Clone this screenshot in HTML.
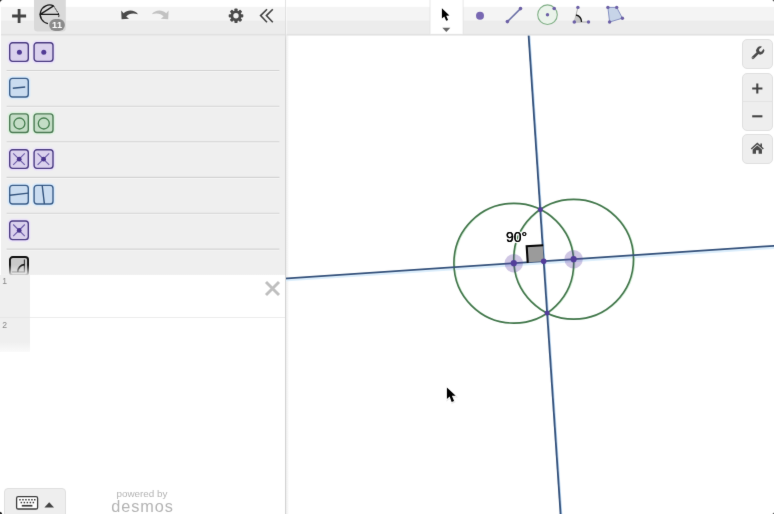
<!DOCTYPE html>
<html>
<head>
<meta charset="utf-8">
<title>Geometry</title>
<style>
html,body{margin:0;padding:0;background:#fff;}
body{width:774px;height:514px;overflow:hidden;position:relative;font-family:"Liberation Sans",Arial,sans-serif;}
#root{position:absolute;left:0;top:0;width:774px;height:514px;overflow:hidden;background:#fff;filter:url(#softblur);}
.abs{position:absolute;}
#ltool{left:1px;top:6.5px;width:284.5px;height:28.5px;background:linear-gradient(#f4f4f4,#f1f1f1 50%,#ececec 55%,#ebebeb);border-bottom:1px solid #dcdcdc;box-sizing:border-box;}
#gtool{left:286.5px;top:6.5px;width:487.5px;height:28.5px;background:linear-gradient(#f4f4f4,#f1f1f1 50%,#ececec 55%,#ebebeb);border-bottom:1px solid #dcdcdc;box-sizing:border-box;}
#folder{left:1px;top:35px;width:284.5px;height:239.5px;background:#efefef;}
.sep{position:absolute;left:6.5px;width:273px;height:1px;background:#d9d9d9;}
.ic{position:absolute;width:20px;height:20px;box-sizing:border-box;border-radius:3.2px;}
.pu{background:#dad1ed;border:1.6px solid #4b3c82;box-shadow:0 0 2.5px 1px #eae1fb;}
.bl{background:#cadcf0;border:1.6px solid #3b5d88;box-shadow:0 0 2.5px 1px #d9ecfd;}
.gr{background:#c4ddc6;border:1.6px solid #4c7a54;box-shadow:0 0 2.5px 1px #dcf2de;}
.bk{background:#cacaca;border:2px solid #111;}
.ic svg{position:absolute;left:-1.6px;top:-1.6px;width:20px;height:20px;}
#rows{left:0;top:274.5px;width:285.5px;}
.row{position:absolute;left:0;width:285.5px;background:#fff;}
.tab{position:absolute;left:0;top:0;width:30px;background:#efefef;}
.num{position:absolute;left:2.2px;top:1.8px;font-size:8.6px;color:#888;}
#vborder{left:285px;top:0;width:1.2px;height:514px;background:linear-gradient(#e4e4e4 0,#dcdcdc 36px,#d4d4d4 40px,#d4d4d4);}
#vborder2{left:286.3px;top:35px;width:2px;height:479px;background:#f1f1f1;}
.btn{position:absolute;left:742px;width:30.5px;background:#eeeeee;border:1px solid #e0e0e0;border-radius:5px;box-sizing:border-box;}
#kb{left:4px;top:487.5px;width:62px;height:30px;background:#eeeeee;border:1px solid #e0e0e0;border-radius:4px;box-sizing:border-box;}
#pw{left:100px;top:487px;width:84px;text-align:center;color:#b4b4b4;line-height:1;}
#pw .a{font-size:9.9px;display:block;margin-top:2.2px;}
#pw .b{font-size:16.3px;letter-spacing:0.9px;display:block;margin-top:-0.9px;padding-left:1px;}
</style>
</head>
<body>
<svg width="0" height="0" style="position:absolute"><defs><filter id="softblur" x="0" y="0" width="100%" height="100%" color-interpolation-filters="sRGB"><feConvolveMatrix order="3" kernelMatrix="0.00524 0.06192 0.00524 0.06192 0.73137 0.06192 0.00524 0.06192 0.00524" divisor="1" edgeMode="duplicate" preserveAlpha="true"/></filter></defs></svg>
<div id="root">

<!-- graph -->
<svg class="abs" style="left:0;top:0" width="774" height="514" viewBox="0 0 774 514">
  <defs><linearGradient id="vb2" x1="0" y1="0" x2="1" y2="0"><stop offset="0" stop-color="#ececec"/><stop offset="1" stop-color="#ffffff"/></linearGradient></defs>
  <rect x="286" y="35" width="3" height="479" fill="url(#vb2)"/>
  <g fill="none" stroke-linecap="butt">
    <g stroke="#d3efd6" stroke-width="1.4">
      <circle cx="514.8" cy="263.4" r="59.9"/>
      <circle cx="574.6" cy="259.4" r="59.9"/>
    </g>
    <line x1="280" y1="280.6" x2="780" y2="247.3" stroke="#dceefc" stroke-width="2.4"/>
    <line x1="529" y1="25" x2="562.4" y2="525" stroke="#b9d6f3" stroke-width="1.2"/>
    <circle cx="513.8" cy="263.2" r="59.9" stroke="#44774d" stroke-width="1.65"/>
    <circle cx="573.6" cy="259.2" r="59.9" stroke="#44774d" stroke-width="1.65"/>
    <line x1="280" y1="278.78" x2="780" y2="245.44" stroke="#35527c" stroke-width="1.8"/>
    <line x1="527.9" y1="25" x2="561.3" y2="525" stroke="#35527c" stroke-width="1.8"/>
  </g>
  <!-- right angle marker -->
  <polygon points="543.7,261.2 527.74,262.27 526.67,246.3 542.63,245.24" fill="#9b9b9b"/>
  <polyline points="527.74,262.9 526.67,246.3 543.2,245.2" fill="none" stroke="#050505" stroke-width="2.1" stroke-linejoin="miter"/>
  <!-- points -->
  <circle cx="513.8" cy="263.2" r="9.2" fill="#6042a6" fill-opacity="0.3"/>
  <circle cx="573.6" cy="259.2" r="9.2" fill="#6042a6" fill-opacity="0.3"/>
  <circle cx="513.8" cy="263.2" r="3.1" fill="#533d9a"/>
  <circle cx="573.6" cy="259.2" r="3.1" fill="#533d9a"/>
  <circle cx="543.7" cy="261.2" r="2.8" fill="#533d9a"/>
  <circle cx="540.3" cy="209.4" r="2.5" fill="#533d9a"/>
  <circle cx="547.1" cy="313" r="2.5" fill="#533d9a"/>
  <text x="506" y="242" font-family="Liberation Sans, Arial, sans-serif" font-size="14" fill="#000" stroke="#fff" stroke-width="2.6" stroke-linejoin="round" paint-order="stroke">90°</text>
  <text x="506" y="242" font-family="Liberation Sans, Arial, sans-serif" font-size="14" fill="#000" stroke="#000" stroke-width="0.2">90°</text>
  <!-- mouse cursor -->
  <polygon points="446.9,387.4 446.9,398.9 449.6,396.6 451.7,401.9 454.1,400.9 451.9,395.8 455.7,395.7" fill="#bbb" stroke="#bbb" stroke-width="1.6" opacity="0.35" transform="translate(0.4 1)"/><polygon points="446.9,387.4 446.9,398.9 449.6,396.6 451.7,401.9 454.1,400.9 451.9,395.8 455.7,395.7" fill="#fff" stroke="#fff" stroke-width="1.5" stroke-linejoin="round"/><polygon points="446.9,387.4 446.9,398.9 449.6,396.6 451.7,401.9 454.1,400.9 451.9,395.8 455.7,395.7" fill="#000"/>
</svg>

<!-- toolbars -->
<svg class="abs" style="left:0;top:0" width="774" height="280" viewBox="0 0 774 280">
  <defs><linearGradient id="tg" x1="0" y1="0" x2="0" y2="1"><stop offset="0" stop-color="#f5f5f5"/><stop offset="0.45" stop-color="#f2f2f2"/><stop offset="0.55" stop-color="#ededed"/><stop offset="1" stop-color="#ebebeb"/></linearGradient></defs>
  <rect x="1" y="35" width="284.5" height="239.5" fill="#efefef"/>
  <rect x="1" y="6.85" width="284.5" height="14" fill="#f4f4f4"/>
  <rect x="1" y="20.6" width="284.5" height="14.8" fill="#ececec"/>
  <rect x="286.5" y="6.85" width="487.5" height="14" fill="#f4f4f4"/>
  <rect x="286.5" y="20.6" width="487.5" height="14.8" fill="#ececec"/>
  <rect x="1" y="33.9" width="284.5" height="1.5" fill="#e1e1e1"/>
  <rect x="286.5" y="33.9" width="487.5" height="1.5" fill="#e1e1e1"/>
</svg>

<!-- separators -->
<svg class="abs" style="left:0;top:36px" width="286" height="240" viewBox="0 36 286 240"><line x1="6.6" y1="71.5" x2="279.4" y2="71.5" stroke="#f5f5f5" stroke-width="1"/><line x1="6.6" y1="70.5" x2="279.4" y2="70.5" stroke="#d3d3d3" stroke-width="1.1"/><line x1="6.6" y1="107.2" x2="279.4" y2="107.2" stroke="#f5f5f5" stroke-width="1"/><line x1="6.6" y1="106.2" x2="279.4" y2="106.2" stroke="#d3d3d3" stroke-width="1.1"/><line x1="6.6" y1="142.8" x2="279.4" y2="142.8" stroke="#f5f5f5" stroke-width="1"/><line x1="6.6" y1="141.8" x2="279.4" y2="141.8" stroke="#d3d3d3" stroke-width="1.1"/><line x1="6.6" y1="178.4" x2="279.4" y2="178.4" stroke="#f5f5f5" stroke-width="1"/><line x1="6.6" y1="177.4" x2="279.4" y2="177.4" stroke="#d3d3d3" stroke-width="1.1"/><line x1="6.6" y1="214.2" x2="279.4" y2="214.2" stroke="#f5f5f5" stroke-width="1"/><line x1="6.6" y1="213.2" x2="279.4" y2="213.2" stroke="#d3d3d3" stroke-width="1.1"/><line x1="6.6" y1="250.1" x2="279.4" y2="250.1" stroke="#f5f5f5" stroke-width="1"/><line x1="6.6" y1="249.1" x2="279.4" y2="249.1" stroke="#d3d3d3" stroke-width="1.1"/></svg>




<svg class="abs" style="left:0;top:36px" width="70" height="244" viewBox="0 36 70 244">
<!-- row 1: points -->
<g transform="translate(9 42.1)"><rect x="-1.8" y="-1.8" width="23.6" height="23.6" rx="5" fill="#e9e0fb" opacity="0.55"/><rect x="-0.9" y="-0.9" width="21.8" height="21.8" rx="4.2" fill="#e9e0fb"/><rect x="0.7" y="0.7" width="18.6" height="18.6" rx="2.8" fill="#dad1ed" stroke="#4b3c82" stroke-width="1.4"/><circle cx="10.4" cy="10.1" r="2.5" fill="#513b95"/></g>
<g transform="translate(33.4 42.1)"><rect x="-1.8" y="-1.8" width="23.900000000000002" height="23.6" rx="5" fill="#e9e0fb" opacity="0.55"/><rect x="-0.9" y="-0.9" width="22.1" height="21.8" rx="4.2" fill="#e9e0fb"/><rect x="0.7" y="0.7" width="18.900000000000002" height="18.6" rx="2.8" fill="#dad1ed" stroke="#4b3c82" stroke-width="1.4"/><circle cx="10.4" cy="10.1" r="2.5" fill="#513b95"/></g>
<!-- row 2: line -->
<g transform="translate(9 77.7)"><rect x="-1.8" y="-1.8" width="23.6" height="23.6" rx="5" fill="#d6eafd" opacity="0.55"/><rect x="-0.9" y="-0.9" width="21.8" height="21.8" rx="4.2" fill="#d6eafd"/><rect x="0.7" y="0.7" width="18.6" height="18.6" rx="2.8" fill="#cadcf0" stroke="#3b5d88" stroke-width="1.4"/><line x1="3.8" y1="10.5" x2="16.2" y2="9.3" stroke="#35557f" stroke-width="1.4"/></g>
<!-- row 3: circles -->
<g transform="translate(9 113.2)"><rect x="-1.8" y="-1.8" width="23.6" height="23.6" rx="5" fill="#dbf2dd" opacity="0.55"/><rect x="-0.9" y="-0.9" width="21.8" height="21.8" rx="4.2" fill="#dbf2dd"/><rect x="0.7" y="0.7" width="18.6" height="18.6" rx="2.8" fill="#c4ddc6" stroke="#4c7a54" stroke-width="1.4"/><circle cx="10.4" cy="10.3" r="5.5" fill="none" stroke="#457d4e" stroke-width="1.3"/></g>
<g transform="translate(33.4 113.2)"><rect x="-1.8" y="-1.8" width="23.900000000000002" height="23.6" rx="5" fill="#dbf2dd" opacity="0.55"/><rect x="-0.9" y="-0.9" width="22.1" height="21.8" rx="4.2" fill="#dbf2dd"/><rect x="0.7" y="0.7" width="18.900000000000002" height="18.6" rx="2.8" fill="#c4ddc6" stroke="#4c7a54" stroke-width="1.4"/><circle cx="10.4" cy="10.3" r="5.5" fill="none" stroke="#457d4e" stroke-width="1.3"/></g>
<!-- row 4: intersections -->
<g transform="translate(9 149.1)"><rect x="-1.8" y="-1.8" width="23.6" height="23.6" rx="5" fill="#e9e0fb" opacity="0.55"/><rect x="-0.9" y="-0.9" width="21.8" height="21.8" rx="4.2" fill="#e9e0fb"/><rect x="0.7" y="0.7" width="18.6" height="18.6" rx="2.8" fill="#dad1ed" stroke="#4b3c82" stroke-width="1.4"/><path d="M4.2 4.2L15.8 15.8M15.8 4.2L4.2 15.8" stroke="#6a5aa6" stroke-width="1.1" fill="none"/><circle cx="10.2" cy="10.1" r="2.4" fill="#4a358e"/></g>
<g transform="translate(33.4 149.1)"><rect x="-1.8" y="-1.8" width="23.900000000000002" height="23.6" rx="5" fill="#e9e0fb" opacity="0.55"/><rect x="-0.9" y="-0.9" width="22.1" height="21.8" rx="4.2" fill="#e9e0fb"/><rect x="0.7" y="0.7" width="18.900000000000002" height="18.6" rx="2.8" fill="#dad1ed" stroke="#4b3c82" stroke-width="1.4"/><path d="M4.2 4.2L15.8 15.8M15.8 4.2L4.2 15.8" stroke="#6a5aa6" stroke-width="1.1" fill="none"/><circle cx="10.2" cy="10.1" r="2.4" fill="#4a358e"/></g>
<!-- row 5: lines -->
<g transform="translate(9 184.7)"><rect x="-1.8" y="-1.8" width="23.6" height="23.6" rx="5" fill="#d6eafd" opacity="0.55"/><rect x="-0.9" y="-0.9" width="21.8" height="21.8" rx="4.2" fill="#d6eafd"/><rect x="0.7" y="0.7" width="18.6" height="18.6" rx="2.8" fill="#cadcf0" stroke="#3b5d88" stroke-width="1.4"/><line x1="0.8" y1="10.6" x2="19.2" y2="8.4" stroke="#35557f" stroke-width="1.4"/></g>
<g transform="translate(33.4 184.7)"><rect x="-1.8" y="-1.8" width="23.900000000000002" height="23.6" rx="5" fill="#d6eafd" opacity="0.55"/><rect x="-0.9" y="-0.9" width="22.1" height="21.8" rx="4.2" fill="#d6eafd"/><rect x="0.7" y="0.7" width="18.900000000000002" height="18.6" rx="2.8" fill="#cadcf0" stroke="#3b5d88" stroke-width="1.4"/><line x1="8.8" y1="0.8" x2="11" y2="19.2" stroke="#35557f" stroke-width="1.4"/></g>
<!-- row 6: intersection -->
<g transform="translate(9 220.3)"><rect x="-1.8" y="-1.8" width="23.6" height="23.6" rx="5" fill="#e9e0fb" opacity="0.55"/><rect x="-0.9" y="-0.9" width="21.8" height="21.8" rx="4.2" fill="#e9e0fb"/><rect x="0.7" y="0.7" width="18.6" height="18.6" rx="2.8" fill="#dad1ed" stroke="#4b3c82" stroke-width="1.4"/><path d="M4.2 4.2L15.8 15.8M15.8 4.2L4.2 15.8" stroke="#6a5aa6" stroke-width="1.1" fill="none"/><circle cx="10.2" cy="10.1" r="2.4" fill="#4a358e"/></g>
<!-- row 7: angle -->
<g transform="translate(9 256.1)"><rect x="-1.8" y="-1.8" width="23.6" height="23.6" rx="5" fill="#efefef" opacity="0.55"/><rect x="-0.9" y="-0.9" width="21.8" height="21.8" rx="4.2" fill="#efefef"/><rect x="0.95" y="0.95" width="18.1" height="18.1" rx="2.8" fill="#c9c9c9" stroke="#111111" stroke-width="1.9"/><path d="M15.4 3.5L15.4 15.9L2.8 15.9" fill="none" stroke="#333" stroke-width="1.1"/><path d="M15.4 8.6A7 7 0 0 0 8.8 15.9" fill="none" stroke="#111" stroke-width="1.7"/></g>
</svg>
<div class="abs" style="left:1px;top:265px;width:284px;height:9.5px;background:linear-gradient(rgba(239,239,239,0),rgba(239,239,239,0.85))"></div>
<!-- expression rows -->
<div id="rows" class="abs">
  <div class="row" style="top:0;height:43.5px;border-bottom:1px solid #ececec;box-sizing:border-box;">
    <div class="tab" style="height:43px"></div><div style="position:absolute;left:0;top:42.5px;width:30px;height:1px;background:#e7e7e7"></div><span class="num">1</span>
  </div>
  <div class="row" style="top:43.5px;height:40px;">
    <div class="tab" style="height:26px;background:linear-gradient(#efefef 0,#efefef 70%,#f6f6f6 90%,#fff)"></div>
    <div class="tab" style="top:0;height:34px;background:linear-gradient(#efefef 0,#efefef 70%,#fafafa)"></div><span class="num">2</span>
  </div>
</div>
<svg class="abs" style="left:264px;top:280px" width="17" height="17" viewBox="0 0 17 17"><path d="M2 2L15 15M15 2L2 15" stroke="#bfbfbf" stroke-width="2.9" fill="none"/></svg>

<!-- left toolbar icons -->
<svg class="abs" style="left:0;top:0" width="286" height="36" viewBox="0 0 286 36">
  <!-- plus -->
  <path d="M19.1 9v14M12.1 16h14" stroke="#444" stroke-width="2.8" fill="none"/>
  <!-- geometry button -->
  <rect x="34" y="-3" width="31.8" height="34.5" rx="3.5" fill="#d9d9d9"/>
  <g fill="none" stroke="#161616" stroke-width="1.3" stroke-linejoin="round">
    <path d="M53.57 5.88A9.4 9.4 0 1 0 47.97 23.66"/>
    <path d="M53.57 5.88L40.2 14.4L59 14.4"/>
    <path d="M53.57 5.88L59 14.4A9.4 9.4 0 0 1 58.54 17.3" stroke-width="0.9" stroke-dasharray="2 0.7"/>
  </g>
  <rect x="49.2" y="18.9" width="15.7" height="12" rx="6" fill="#8b8b8b"/>
  <text x="57.2" y="28.2" text-anchor="middle" font-family="Liberation Sans, Arial, sans-serif" font-size="9.2" font-weight="bold" fill="#fff" letter-spacing="0.3">11</text>
  <!-- undo -->
  <path d="M121.2 10.6L121.6 19.2L129 18.8L126.2 16.4C128.6 13.6 133 12.6 138 14.2C135 10.2 128.2 9 123.6 13.2Z" fill="#4a4a4a"/>
  <!-- redo -->
  <path d="M168.6 10.6L168.2 19.2L160.8 18.8L163.6 16.4C161.2 13.6 156.8 12.6 151.8 14.2C154.8 10.2 161.6 9 166.200 13.2Z" fill="#c2c2c2"/>
  <!-- gear -->
  <g transform="translate(236 15.8)" fill="#4a4a4a">
    <circle r="5.4" />
    <g id="teeth">
      <rect x="-1.6" y="-7.3" width="3.2" height="14.6" rx="0.8"/>
      <rect x="-1.6" y="-7.3" width="3.2" height="14.6" rx="0.8" transform="rotate(45)"/>
      <rect x="-1.6" y="-7.3" width="3.2" height="14.6" rx="0.8" transform="rotate(90)"/>
      <rect x="-1.6" y="-7.3" width="3.2" height="14.6" rx="0.8" transform="rotate(135)"/>
    </g>
    <circle r="2.7" fill="#f1f1f1"/>
  </g>
  <!-- chevrons -->
  <path d="M267 9.2L260.600 15.6L267 22.200M272.800 9.2L266.400 15.6L272.800 22.200" fill="none" stroke="#444" stroke-width="1.6"/>
</svg>

<!-- graph toolbar icons -->
<svg class="abs" style="left:420px;top:0" width="230" height="40" viewBox="420 0 230 40">
  <rect x="430" y="-2" width="33.1" height="36.3" fill="#fff" stroke="#e2e2e2" stroke-width="0.8"/>
  <!-- arrow cursor -->
  <polygon points="441.9,8.2 441.9,18.6 444.3,16.4 446.2,20.8 448.1,20 446.2,15.7 449.4,15.6" fill="#000"/>
  <polygon points="442.3,27.8 450.3,27.8 446.3,32" fill="#666"/>
  <!-- point -->
  <circle cx="480" cy="15.7" r="4" fill="#7868b2"/>
  <!-- segment -->
  <line x1="507.4" y1="21.6" x2="520.5" y2="8.6" stroke="#6b70a6" stroke-width="1.5"/>
  <circle cx="507.4" cy="21.6" r="1.8" fill="#6c60a6"/>
  <circle cx="520.5" cy="8.6" r="1.8" fill="#6c60a6"/>
  <!-- circle -->
  <circle cx="547.5" cy="14.7" r="9.8" fill="#eaf3ea" stroke="#82b088" stroke-width="1.1"/>
  <circle cx="547.5" cy="14.7" r="1.7" fill="#6c60a6"/>
  <circle cx="554.2" cy="8.5" r="1.8" fill="#6c60a6"/>
  <!-- angle -->
  <path d="M574.3 22L588.5 22M574.3 22L577.9 7.4" stroke="#9a9a9a" stroke-width="0.8" fill="none"/>
  <path d="M574.3 22L581.5 22A7.2 7.2 0 0 0 576.05 15Z" fill="#c4c4c4"/>
  <path d="M581.5 22A7.2 7.2 0 0 0 576.05 15" stroke="#111" stroke-width="1.3" fill="none"/>
  <circle cx="574.3" cy="22" r="1.8" fill="#6c60a6"/>
  <circle cx="577.9" cy="7.4" r="1.7" fill="#6c60a6"/>
  <circle cx="588.5" cy="22" r="1.7" fill="#6c60a6"/>
  <!-- polygon -->
  <polygon points="607.9,7.4 616.7,7.4 622.4,18.2 609.6,22" fill="#c7d4e8" stroke="#8791c2" stroke-width="1"/>
  <circle cx="607.9" cy="7.4" r="1.7" fill="#6c60a6"/>
  <circle cx="616.7" cy="7.4" r="1.7" fill="#6c60a6"/>
  <circle cx="622.4" cy="18.2" r="1.7" fill="#6c60a6"/>
  <circle cx="609.6" cy="22" r="1.7" fill="#6c60a6"/>
</svg>

<!-- right buttons -->
<div class="btn" style="top:39px;height:29.5px"></div>
<div class="btn" style="top:72.5px;height:58px"><div style="position:absolute;left:0;right:0;top:27px;height:1px;background:#e3e3e3"></div></div>
<div class="btn" style="top:134px;height:29.5px"></div>
<svg class="abs" style="left:740px;top:36px" width="34" height="130" viewBox="740 36 34 130">
  <!-- wrench -->
  <g transform="translate(760.2 50.5) rotate(45)">
    <circle cx="0" cy="0" r="3.9" fill="#4a4a4a"/>
    <rect x="-1.300" y="2" width="2.600" height="9.600" rx="1.300" fill="#4a4a4a"/>
    <rect x="-1.45" y="-4.6" width="2.9" height="4" fill="#eeeeee"/>
    <circle cx="0" cy="-0.7" r="1.65" fill="#eeeeee"/>
    <circle cx="0" cy="10.3" r="0.55" fill="#e0e0e0"/>
  </g>
  <!-- plus / minus -->
  <path d="M757.300 83.400v10.200M752.200 88.500h10.200" stroke="#444" stroke-width="2.100" fill="none"/>
  <path d="M752.200 116.300h10.200" stroke="#444" stroke-width="2.100" fill="none"/>
  <!-- home -->
  <g fill="#4a4a4a" transform="translate(757.3 148.200) scale(0.93) translate(-757.3 -148.400)">
    <path d="M757.3 142.400L750.300 148.600L751.300 149.700L757.3 144.500L763.300 149.700L764.300 148.600L762.300 146.800L762.300 143.300L760.600 143.300L760.600 145.300Z"/>
    <path d="M757.3 145.600L752.300 149.900L752.300 154.300L755.900 154.300L755.900 150.700L758.700 150.700L758.700 154.300L762.300 154.300L762.300 149.900Z"/>
  </g>
</svg>

<!-- keyboard button -->
<div id="kb" class="abs"></div>
<svg class="abs" style="left:0;top:486px" width="70" height="28" viewBox="0 486 70 28">
  <rect x="16.600" y="496.600" width="21" height="12.400" rx="1.600" fill="#fff" stroke="#3d3d3d" stroke-width="1.300"/>
  <g fill="#3d3d3d">
    <rect x="19.200" y="499" width="1.500" height="1.500"/><rect x="22.200" y="499" width="1.500" height="1.500"/><rect x="25.200" y="499" width="1.500" height="1.500"/><rect x="28.200" y="499" width="1.500" height="1.500"/><rect x="31.200" y="499" width="1.500" height="1.500"/><rect x="34.000" y="499" width="1.500" height="1.500"/>
    <rect x="20.600" y="501.800" width="1.500" height="1.500"/><rect x="23.600" y="501.800" width="1.500" height="1.500"/><rect x="26.600" y="501.800" width="1.500" height="1.500"/><rect x="29.600" y="501.800" width="1.500" height="1.500"/><rect x="32.600" y="501.800" width="1.500" height="1.500"/>
    <rect x="21.800" y="504.900" width="10.600" height="1.700"/>
  </g>
  <polygon points="44.400,507.600 54,507.600 49.200,502.200" fill="#444"/>
</svg>
<div id="pw" class="abs"><span class="a">powered by</span><span class="b">desmos</span></div>

<div id="vborder" class="abs"></div>

<!-- window corner artefacts -->
<svg class="abs" style="left:0;top:0" width="774" height="514" viewBox="0 0 774 514">
  <path d="M0 0H2.500A3 3 0 0 0 0 2.500Z" fill="#222"/>
  <path d="M0 514H2.200A2.500 2.500 0 0 0 0 511.800Z" fill="#222"/>
  <path d="M774 0H772A2.200 2.200 0 0 1 774 2Z" fill="#222"/>
  <path d="M774 514H772.200A2 2 0 0 0 774 512.200Z" fill="#222"/>
</svg>

</div>
</body>
</html>
